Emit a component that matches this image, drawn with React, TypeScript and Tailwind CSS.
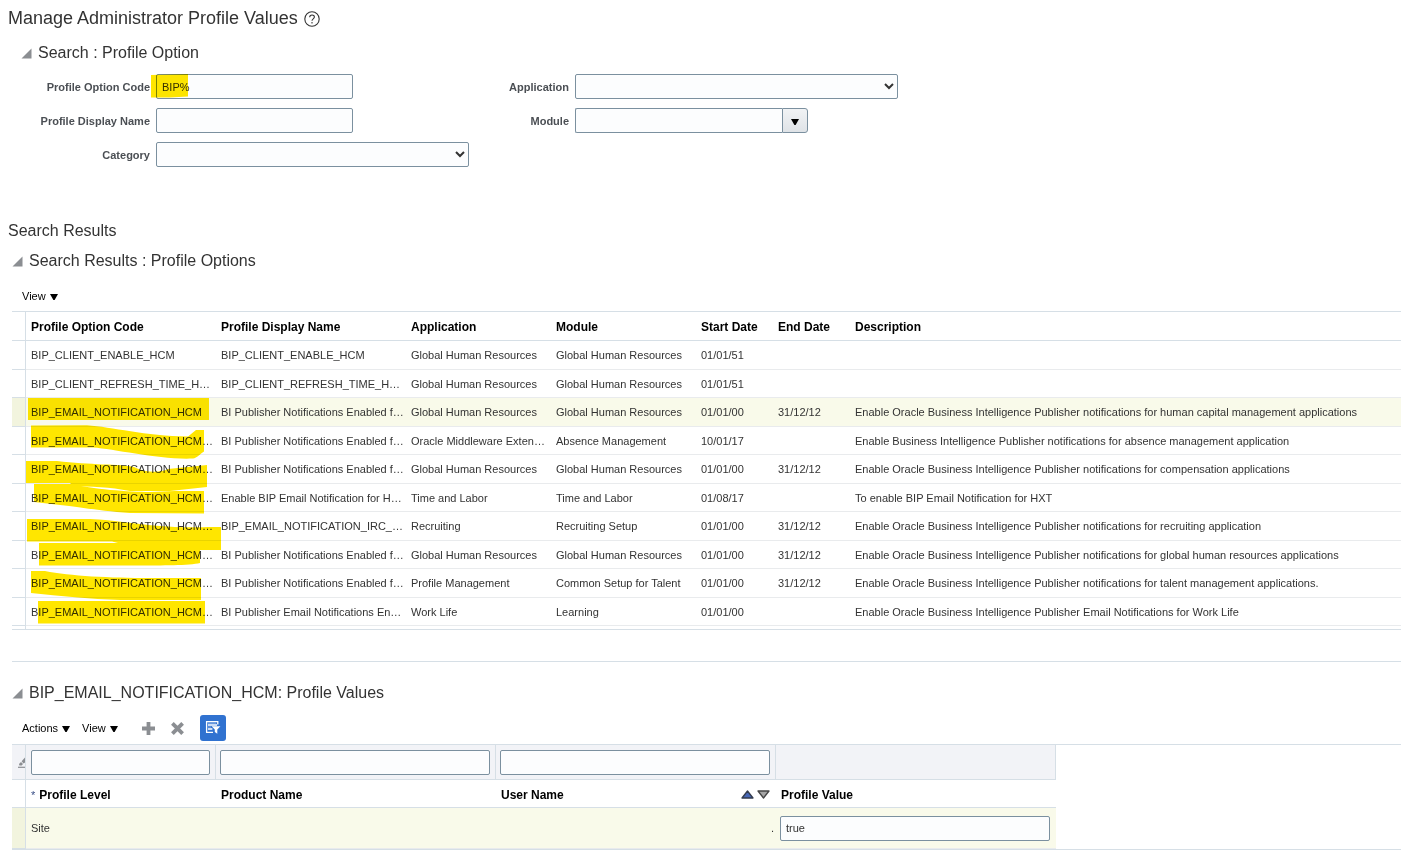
import React, { useState } from 'react';

interface ProfileOption {
    code: string;
    name: string;
    application: string;
    module: string;
    start: string;
    end: string;
    description: string;
}

const profileOptions: ProfileOption[] = [
    { code: 'BIP_CLIENT_ENABLE_HCM', name: 'BIP_CLIENT_ENABLE_HCM', application: 'Global Human Resources', module: 'Global Human Resources', start: '01/01/51', end: '', description: '' },
    { code: 'BIP_CLIENT_REFRESH_TIME_H…', name: 'BIP_CLIENT_REFRESH_TIME_H…', application: 'Global Human Resources', module: 'Global Human Resources', start: '01/01/51', end: '', description: '' },
    { code: 'BIP_EMAIL_NOTIFICATION_HCM', name: 'BI Publisher Notifications Enabled f…', application: 'Global Human Resources', module: 'Global Human Resources', start: '01/01/00', end: '31/12/12', description: 'Enable Oracle Business Intelligence Publisher notifications for human capital management applications' },
    { code: 'BIP_EMAIL_NOTIFICATION_HCM…', name: 'BI Publisher Notifications Enabled f…', application: 'Oracle Middleware Exten…', module: 'Absence Management', start: '10/01/17', end: '', description: 'Enable Business Intelligence Publisher notifications for absence management application' },
    { code: 'BIP_EMAIL_NOTIFICATION_HCM…', name: 'BI Publisher Notifications Enabled f…', application: 'Global Human Resources', module: 'Global Human Resources', start: '01/01/00', end: '31/12/12', description: 'Enable Oracle Business Intelligence Publisher notifications for compensation applications' },
    { code: 'BIP_EMAIL_NOTIFICATION_HCM…', name: 'Enable BIP Email Notification for H…', application: 'Time and Labor', module: 'Time and Labor', start: '01/08/17', end: '', description: 'To enable BIP Email Notification for HXT' },
    { code: 'BIP_EMAIL_NOTIFICATION_HCM…', name: 'BIP_EMAIL_NOTIFICATION_IRC_…', application: 'Recruiting', module: 'Recruiting Setup', start: '01/01/00', end: '31/12/12', description: 'Enable Oracle Business Intelligence Publisher notifications for recruiting application' },
    { code: 'BIP_EMAIL_NOTIFICATION_HCM…', name: 'BI Publisher Notifications Enabled f…', application: 'Global Human Resources', module: 'Global Human Resources', start: '01/01/00', end: '31/12/12', description: 'Enable Oracle Business Intelligence Publisher notifications for global human resources applications' },
    { code: 'BIP_EMAIL_NOTIFICATION_HCM…', name: 'BI Publisher Notifications Enabled f…', application: 'Profile Management', module: 'Common Setup for Talent', start: '01/01/00', end: '31/12/12', description: 'Enable Oracle Business Intelligence Publisher notifications for talent management applications.' },
    { code: 'BIP_EMAIL_NOTIFICATION_HCM…', name: 'BI Publisher Email Notifications En…', application: 'Work Life', module: 'Learning', start: '01/01/00', end: '', description: 'Enable Oracle Business Intelligence Publisher Email Notifications for Work Life' },
];

const fieldClass = 'h-[25px] rounded-[2px] border border-[#7b909f] bg-[#fcfdfe] px-[5px] text-[11px] text-[#333333] focus:outline-none';
const labelClass = 'shrink-0 pt-0.5 text-right text-[11px] font-bold text-[#4b4f54]';
const headClass = 'border-b border-[#d6dfe6] pt-0.5 pl-[5px] text-left text-[12px] font-bold text-black';
const cellClass = 'truncate border-b border-[#e9ebed] pl-[5px] text-[11px] leading-4';

const Disclosure = () => (
    <svg width="11" height="11" viewBox="0 0 11 11" aria-hidden="true">
        <path d="M10.5 0.5V10.5H0.5Z" fill="#8b8e92" />
    </svg>
);

const DownArrow = () => (
    <svg width="8" height="6" viewBox="0 0 8 6" aria-hidden="true">
        <path d="M0 0H8L4.6 6H3.4Z" fill="#000" />
    </svg>
);

const SectionTitle = ({ children }: { children: React.ReactNode }) => (
    <h2 className="flex h-[30px] items-center gap-1.5 pt-0.5 text-[16px] text-[#333333]">
        <button type="button" aria-label="Collapse">
            <Disclosure />
        </button>
        {children}
    </h2>
);

const MenuButton = ({ label }: { label: string }) => (
    <button type="button" className="flex items-center gap-1 text-[11px] text-black">
        {label}
        <span className="pt-0.5">
            <DownArrow />
        </span>
    </button>
);

// Marker strokes over the option codes
const Highlights = () => (
    <svg
        className="pointer-events-none absolute top-0 left-0 mix-blend-multiply"
        width="220"
        height="318"
        viewBox="12 312 220 318"
        fill="#ffe600"
        aria-hidden="true"
    >
        <path d="M28 398H209V420H28Z" />
        <path d="M31 425.5L87 425.3C112 427 145 436 188 436.5L196 430H204V451.5C200 454 197 458 193 458.5C160 460 115 449 93 447.5H31Z" />
        <path d="M26 461H57C90 465 120 464 134 467C146 473 160 473 168 469L207 465V487L170 491H130C110 487 90 486.5 73 486L70 483H26Z" />
        <path d="M34 484H72C90 489 130 492 150 492L175 491H204V513.5L130 513C100 511 80 507 60 505L34 502Z" />
        <path d="M27 519H90C115 520 135 524 160 526C180 528 200 527 213 527H221V550H200V563C190 565.5 160 565.5 140 565.5H39V543L118 543L112 541.5H27Z" />
        <path d="M31 571H45C70 576 110 578 150 578H201V600H120C90 599 60 596 31 593Z" />
        <path d="M38 601H205V623.5H38Z" />
    </svg>
);

const App = () => {
    const [optionCode, setOptionCode] = useState('BIP%');
    const [profileValue, setProfileValue] = useState('true');

    return (
        <div className="overflow-x-hidden bg-white font-['Liberation_Sans',Arial,sans-serif] text-[#333333]">
            <h1 className="flex h-9 items-center gap-1.5 pl-2 text-[18px]">
                Manage Administrator Profile Values
                <button type="button" aria-label="Help" className="pt-0.5">
                    <svg width="16" height="16" viewBox="0 0 16 16" fill="none" stroke="#333" strokeWidth="1.1" aria-hidden="true">
                        <circle cx="8" cy="8" r="7.2" />
                        <path d="M5.7 6.3C5.7 3.3 10.4 3.3 10.4 6.1C10.4 7.8 8 7.9 8 9.7" />
                        <path d="M8 11.1V12.4" />
                    </svg>
                </button>
            </h1>

            <section>
                <div className="py-px pl-[21px]">
                    <SectionTitle>Search : Profile Option</SectionTitle>
                </div>
                <form className="flex items-start pt-1.5" onSubmit={(e) => e.preventDefault()}>
                    <div className="flex w-[469px] flex-col gap-[9px]">
                        <div className="flex items-center gap-1.5">
                            <label htmlFor="optionCode" className={`${labelClass} w-[150px]`}>Profile Option Code</label>
                            <div className="relative flex">
                                <input
                                    id="optionCode"
                                    className={`${fieldClass} w-[197px]`}
                                    value={optionCode}
                                    onChange={(e) => setOptionCode(e.target.value)}
                                />
                                <svg className="pointer-events-none absolute top-0 -left-1.5 mix-blend-multiply" width="38" height="25" viewBox="0 0 38 25" aria-hidden="true">
                                    <path d="M1 1L38 0V22.5L20 23.5H1Z" fill="#ffe600" />
                                </svg>
                            </div>
                        </div>
                        <div className="flex items-center gap-1.5">
                            <label htmlFor="displayName" className={`${labelClass} w-[150px]`}>Profile Display Name</label>
                            <input id="displayName" className={`${fieldClass} w-[197px]`} />
                        </div>
                        <div className="flex items-center gap-1.5">
                            <label htmlFor="category" className={`${labelClass} w-[150px]`}>Category</label>
                            <select id="category" className={`${fieldClass} w-[313px]`}>
                                <option value=""></option>
                            </select>
                        </div>
                    </div>
                    <div className="flex flex-col gap-[9px]">
                        <div className="flex items-center gap-1.5">
                            <label htmlFor="application" className={`${labelClass} w-[100px]`}>Application</label>
                            <select id="application" className={`${fieldClass} w-[323px]`}>
                                <option value=""></option>
                            </select>
                        </div>
                        <div className="flex items-center gap-1.5">
                            <label htmlFor="module" className={`${labelClass} w-[100px]`}>Module</label>
                            <div className="flex">
                                <input id="module" className={`${fieldClass} w-[207px] rounded-r-none border-r-0`} />
                                <button
                                    type="button"
                                    aria-label="Search Module"
                                    className="flex h-[25px] w-[26px] items-center justify-center rounded-r-[3px] border border-[#7b909f] bg-linear-to-b from-[#f1f3f5] to-[#dfe3e7] pt-0.5"
                                >
                                    <DownArrow />
                                </button>
                            </div>
                        </div>
                    </div>
                </form>
            </section>

            <section className="mt-12">
                <h2 className="flex h-[30px] items-center pt-0.5 pl-2 text-[16px]">Search Results</h2>
                <div className="pl-3">
                    <SectionTitle>Search Results : Profile Options</SectionTitle>
                    <div className="mt-1.5 flex h-[30px] items-center pl-2.5">
                        <MenuButton label="View" />
                    </div>
                    <div className="relative border-y border-[#d6dfe6]">
                        <table className="w-full table-fixed border-separate border-spacing-0">
                            <colgroup>
                                <col className="w-[14px]" />
                                <col className="w-[190px]" />
                                <col className="w-[190px]" />
                                <col className="w-[145px]" />
                                <col className="w-[145px]" />
                                <col className="w-[77px]" />
                                <col className="w-[77px]" />
                                <col />
                            </colgroup>
                            <thead>
                                <tr className="h-[29px]">
                                    <td className="border-r border-b border-[#d6dfe6]"></td>
                                    <th className={headClass}>Profile Option Code</th>
                                    <th className={headClass}>Profile Display Name</th>
                                    <th className={headClass}>Application</th>
                                    <th className={headClass}>Module</th>
                                    <th className={headClass}>Start Date</th>
                                    <th className={headClass}>End Date</th>
                                    <th className={headClass}>Description</th>
                                </tr>
                            </thead>
                            <tbody>
                                {profileOptions.map((option, i) => (
                                    <tr key={i} className={`odd:h-[29px] even:h-[28px] ${i === 2 ? 'bg-[#f9faea]' : ''}`}>
                                        <td className={`border-r border-b border-[#d6dfe6] ${i === 2 ? 'bg-[#f2f4de]' : ''}`}></td>
                                        <td className={cellClass}>{option.code}</td>
                                        <td className={cellClass}>{option.name}</td>
                                        <td className={cellClass}>{option.application}</td>
                                        <td className={cellClass}>{option.module}</td>
                                        <td className={cellClass}>{option.start}</td>
                                        <td className={cellClass}>{option.end}</td>
                                        <td className={cellClass}>{option.description}</td>
                                    </tr>
                                ))}
                                <tr className="h-[3px]">
                                    <td className="border-r border-[#d6dfe6]"></td>
                                    <td colSpan={7}></td>
                                </tr>
                            </tbody>
                        </table>
                        <Highlights />
                    </div>
                </div>
            </section>

            <section className="mt-[31px] ml-3 border-t border-[#d6dfe6] pt-[15px]">
                <SectionTitle>BIP_EMAIL_NOTIFICATION_HCM: Profile Values</SectionTitle>
                <div className="mt-[5px] flex h-8 items-center pl-2.5">
                    <div className="flex gap-3">
                        <MenuButton label="Actions" />
                        <MenuButton label="View" />
                    </div>
                    <button type="button" aria-label="Add" className="ml-6">
                        <svg width="13" height="13" viewBox="0 0 13 13" aria-hidden="true">
                            <path d="M4.6 0H8.4V4.6H13V8.4H8.4V13H4.6V8.4H0V4.6H4.6Z" fill="#8b8e92" />
                        </svg>
                    </button>
                    <button type="button" aria-label="Delete" className="ml-4">
                        <svg width="13" height="13" viewBox="0 0 13 13" aria-hidden="true">
                            <path d="M1.4 1.4L11.6 11.6M11.6 1.4L1.4 11.6" stroke="#8b8e92" strokeWidth="3.8" />
                        </svg>
                    </button>
                    <button type="button" aria-label="Query by example" className="ml-4 flex size-[26px] items-center justify-center rounded-[3px] bg-[#3072d0]">
                        <svg width="16" height="16" viewBox="0 0 16 16" aria-hidden="true">
                            <path d="M1 1.6H13.4M1.6 1V12.6M1 12.4H8M12.8 1V4.6" fill="none" stroke="#fff" strokeWidth="1.3" />
                            <path d="M3 5H12M3 9H7.4" stroke="#fff" strokeWidth="1.4" />
                            <path d="M3 3.2H11M3 7H6" stroke="#fff" strokeOpacity="0.5" strokeWidth="0.8" />
                            <path d="M6.6 6.2H15.4L12.3 9.6V13.8L9.8 12V9.6Z" fill="#fff" />
                        </svg>
                    </button>
                </div>
                <div className="border-y border-[#d6dfe6]">
                    <table className="w-[1044px] table-fixed border-separate border-spacing-0">
                        <colgroup>
                            <col className="w-[14px]" />
                            <col className="w-[190px]" />
                            <col className="w-[280px]" />
                            <col className="w-[280px]" />
                            <col className="w-[280px]" />
                        </colgroup>
                        <thead>
                            <tr className="h-[35px] bg-[#f2f3f7]">
                                <td className="border-r border-b border-[#d6dfe6]">
                                    <button type="button" aria-label="Clear filters" className="flex w-full justify-end">
                                        <svg width="7" height="11" viewBox="0 0 7 11" aria-hidden="true">
                                            <path d="M0 10.3H7" stroke="#8b8e92" strokeWidth="1.2" />
                                            <path d="M1 7L3 5L5 7L3.6 8.6H1.4Z" fill="#8b8e92" />
                                            <path d="M3.6 4.2L7 0.6V5.4L5.6 6.4Z" fill="#8b8e92" />
                                        </svg>
                                    </button>
                                </td>
                                <td className="border-r border-b border-[#d6dfe6] px-[5px]">
                                    <input aria-label="Profile Level" className={`${fieldClass} block w-full`} />
                                </td>
                                <td className="border-r border-b border-[#d6dfe6] pr-[5px] pl-1">
                                    <input aria-label="Product Name" className={`${fieldClass} block w-full`} />
                                </td>
                                <td className="border-r border-b border-[#d6dfe6] pr-[5px] pl-1">
                                    <input aria-label="User Name" className={`${fieldClass} block w-full`} />
                                </td>
                                <td className="border-r border-b border-[#d6dfe6]"></td>
                            </tr>
                            <tr className="h-[28px]">
                                <td className="border-r border-b border-[#d6dfe6]"></td>
                                <th className={headClass}>
                                    <span className="mr-1 text-[11px] font-normal text-[#3a4f86]">*</span>
                                    Profile Level
                                </th>
                                <th className={headClass}>Product Name</th>
                                <th className={headClass}>
                                    <div className="flex items-center justify-between pr-1.5">
                                        User Name
                                        <button type="button" aria-label="Sort" className="flex gap-[3px]">
                                            <svg width="13" height="9" viewBox="0 0 13 9" aria-hidden="true">
                                                <path d="M6.5 1L12 8H1Z" fill="#4767b5" stroke="#333b4d" strokeWidth="1.3" strokeLinejoin="round" />
                                            </svg>
                                            <svg width="13" height="9" viewBox="0 0 13 9" aria-hidden="true">
                                                <path d="M6.5 8L12 1H1Z" fill="#a5a5a5" stroke="#444" strokeWidth="1.3" strokeLinejoin="round" />
                                            </svg>
                                        </button>
                                    </div>
                                </th>
                                <th className={headClass}>Profile Value</th>
                            </tr>
                        </thead>
                        <tbody>
                            <tr className="h-[41px] bg-[#f9faea]">
                                <td className="border-r border-b border-[#d6dfe6] bg-[#f2f4de]"></td>
                                <td className={cellClass}>Site</td>
                                <td className={cellClass}></td>
                                <td className={`${cellClass} pr-[2px] text-right`}>.</td>
                                <td className="border-b border-[#e9ebed] pr-1.5 pl-1">
                                    <input
                                        aria-label="Profile Value"
                                        className={`${fieldClass} block w-full`}
                                        value={profileValue}
                                        onChange={(e) => setProfileValue(e.target.value)}
                                    />
                                </td>
                            </tr>
                        </tbody>
                    </table>
                </div>
            </section>
        </div>
    );
};

export default App;
